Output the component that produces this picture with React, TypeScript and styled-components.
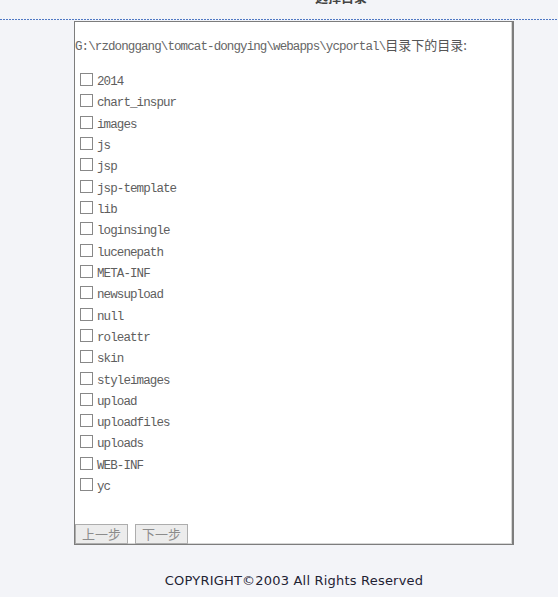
import React from "react";
import styled, { createGlobalStyle } from "styled-components";

const GlobalStyle = createGlobalStyle`
  html, body {
    margin: 0;
    padding: 0;
    background: #f3f4f8;
  }
  body {
    font-family: "Liberation Mono", "Noto Sans CJK SC", monospace;
  }
`;

const Header = styled.div`
  display: flow-root;
  height: 19px;
  padding-left: 124px;
  text-align: center;
`;

const Title = styled.div`
  margin-top: -10px;
  line-height: 14px;
  font-family: "Noto Sans CJK SC", sans-serif;
  font-weight: bold;
  font-size: 13px;
  color: #444;
`;

const Divider = styled.div`
  height: 1px;
  background: repeating-linear-gradient(
    to right,
    #4f78c4 0 2px,
    transparent 2px 3px
  );
`;

const Main = styled.div`
  padding-left: 30px;
  display: flow-root;
`;

const Panel = styled.div`
  box-sizing: border-box;
  width: 440px;
  height: 524px;
  margin: 1px auto 0;
  background: #fff;
  border: 1px solid #7d7d7d;
  border-right-width: 2px;
  box-shadow: inset -1px -1px 0 #d6d6d6;
  display: flex;
  flex-direction: column;
`;

const PathLine = styled.div`
  margin-top: 15px;
  height: 16px;
  line-height: 16px;
  white-space: nowrap;
  font-size: 12.5px;
  letter-spacing: -0.9px;
  color: #666;
`;

const Cjk = styled.span`
  font-family: "Noto Sans CJK SC", sans-serif;
  font-size: 13px;
  letter-spacing: 0;
  color: #555;
`;

const List = styled.div`
  margin-top: 16px;
  display: flex;
  flex-direction: column;
`;

const Row = styled.label`
  height: 21.32px;
  display: flex;
  align-items: center;
`;

const Box = styled.input`
  appearance: none;
  -webkit-appearance: none;
  box-sizing: border-box;
  width: 13px;
  height: 13px;
  margin: 0 4px 0 5px;
  border: 1px solid #888;
  background: #fff;
  flex: none;
`;

const Name = styled.span`
  font-size: 12.5px;
  letter-spacing: -0.9px;
  color: #5e5e5e;
  padding-top: 5px;
`;

const Buttons = styled.div`
  margin-top: auto;
  display: flex;
  gap: 7px;
`;

const Button = styled.button`
  box-sizing: border-box;
  width: 53px;
  height: 20px;
  padding: 0;
  margin: 0;
  background: #ececec;
  border: 1px solid #adadad;
  font-family: "Noto Sans CJK SC", sans-serif;
  font-size: 13px;
  line-height: 16px;
  color: #8c8c8c;
`;

const Footer = styled.div`
  margin-top: 28px;
  text-align: center;
  line-height: 16px;
  font-family: "DejaVu Sans", sans-serif;
  font-size: 13px;
  letter-spacing: 0.2px;
  color: #1e2233;
`;

const dirs = [
  "2014",
  "chart_inspur",
  "images",
  "js",
  "jsp",
  "jsp-template",
  "lib",
  "loginsingle",
  "lucenepath",
  "META-INF",
  "newsupload",
  "null",
  "roleattr",
  "skin",
  "styleimages",
  "upload",
  "uploadfiles",
  "uploads",
  "WEB-INF",
  "yc",
];

export default function App() {
  return (
    <>
      <GlobalStyle />
      <Header>
        <Title>选择目录</Title>
      </Header>
      <Divider />
      <Main>
        <Panel>
          <PathLine>
            G:\rzdonggang\tomcat-dongying\webapps\ycportal\
            <Cjk>目录下的目录:</Cjk>
          </PathLine>
          <List>
            {dirs.map((d) => (
              <Row key={d}>
                <Box type="checkbox" />
                <Name>{d}</Name>
              </Row>
            ))}
          </List>
          <Buttons>
            <Button type="button">上一步</Button>
            <Button type="button">下一步</Button>
          </Buttons>
        </Panel>
        <Footer>COPYRIGHT©2003 All Rights Reserved</Footer>
      </Main>
    </>
  );
}
